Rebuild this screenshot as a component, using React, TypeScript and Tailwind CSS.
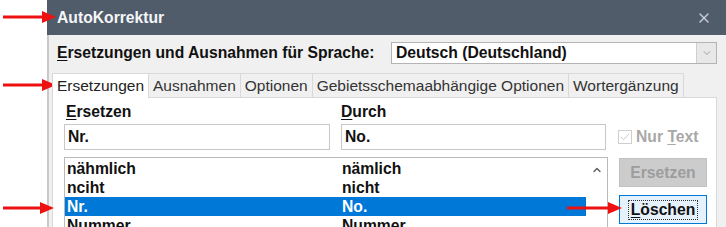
import { Check, ChevronDown, ChevronUp, X } from 'lucide-react';

const FONT = { fontFamily: '"Liberation Sans", Arial, sans-serif' };

const tabs = ['Ersetzungen', 'Ausnahmen', 'Optionen', 'Gebietsschemaabhängige Optionen', 'Wortergänzung'];

const rows = [
  { from: 'nähmlich', to: 'nämlich' },
  { from: 'nciht', to: 'nicht' },
  { from: 'Nr.', to: 'No.', selected: true },
  { from: 'Nummer', to: 'Nummer' },
];

function Arrow({ x, y, length }: { x: number; y: number; length: number }) {
  // red annotation arrow, tip at x + length
  return (
    <svg
      className="absolute pointer-events-none"
      style={{ left: x, top: y - 7 }}
      width={length}
      height={14}
      viewBox={`0 0 ${length} 14`}>
      <rect x={0} y={5.5} width={length - 13} height={3} fill="#ee1111" />
      <polygon points={`${length - 14},1 ${length},7 ${length - 14},13`} fill="#ee1111" />
    </svg>
  );
}

export default function App() {
  return (
    <div className="relative w-[726px] h-[227px] overflow-hidden bg-white" style={FONT}>
      <div className="ml-[47px] flex flex-col h-full">
        {/* title bar */}
        <div className="h-[35px] shrink-0 bg-[#515c6b] flex items-center justify-between pl-[10px] pr-[14px]">
          <span className="text-[15.7px] font-bold text-[#f4f5f7]">AutoKorrektur</span>
          <X size={16} strokeWidth={2} className="text-[#c9ced6]" />
        </div>

        {/* body */}
        <div className="flex-1 bg-[#f0f0f0] border-l-2 border-[#c9c9c9] pl-[3px] pr-[9px]">
          <div className="flex items-center h-[22px] mt-[7px] pl-[5px]">
            <span className="w-[334px] text-[15.7px] font-bold text-[#111]">
              <span className="underline underline-offset-2">E</span>rsetzungen und Ausnahmen für Sprache:
            </span>
            <div className="flex-1 h-[22px] flex items-center bg-white border border-[#b4b4b4]">
              <span className="flex-1 pl-[4px] text-[15.7px] font-bold text-[#111]">Deutsch (Deutschland)</span>
              <div className="w-[20px] h-full flex items-center justify-center bg-[#e8e8e8] border-l border-[#cfcfcf]">
                <ChevronDown size={12} strokeWidth={1.5} className="text-[#888]" />
              </div>
            </div>
          </div>

          {/* tabs */}
          <div className="flex items-end h-[24px] mt-[9px]">
            {tabs.map((t, i) => (
              <div
                key={t}
                className={`h-[24px] px-[4px] flex items-center text-[15.5px] border-t border-r border-[#d9d9d9] ${
                  i === 0 ? 'bg-white border-l text-[#222] -mb-px relative z-10 h-[25px]' : 'bg-[#f0f0f0] text-[#333]'
                }`}>
                {t}
              </div>
            ))}
          </div>

          {/* panel */}
          <div className="bg-white border border-[#d9d9d9] h-[200px] pl-[11px] pt-[5px]">
            <div className="flex text-[15.7px] leading-[18px] font-bold text-[#111]">
              <span className="w-[277px] pl-[2px]">
                <span className="underline underline-offset-2">E</span>rsetzen
              </span>
              <span>
                <span className="underline underline-offset-2">D</span>urch
              </span>
            </div>

            <div className="flex items-center mt-[3px]">
              <div className="w-[266px] h-[26px] border border-[#c8c8c8] flex items-center pl-[3px] text-[15.7px] font-bold text-[#111]">
                Nr.
              </div>
              <div className="w-[265px] ml-[11px] h-[26px] border border-[#c8c8c8] flex items-center pl-[3px] text-[15.7px] font-bold text-[#111]">
                No.
              </div>
              <div className="ml-[12px] flex items-center gap-[4px] text-[15.7px] font-bold text-[#a8a8a8]">
                <span className="w-[14px] h-[14px] border border-[#cfcfcf] flex items-center justify-center">
                  <Check size={12} strokeWidth={1.5} className="text-[#b8b8b8]" />
                </span>
                <span>
                  Nur <span className="underline underline-offset-2">T</span>ext
                </span>
              </div>
            </div>

            <div className="flex mt-[7px]">
              {/* list */}
              <div className="w-[544px] h-[90px] border border-[#b9b9b9] flex pt-px">
                <div className="flex-1 flex flex-col">
                  {rows.map(r => (
                    <div
                      key={r.from}
                      className={`h-[19px] shrink-0 flex items-center text-[15.7px] font-bold ${
                        r.selected ? 'bg-[#0078d7] text-white' : 'text-[#111]'
                      }`}>
                      <span className="w-[277px] pl-[2px]">{r.from}</span>
                      <span>{r.to}</span>
                    </div>
                  ))}
                </div>
                <div className="w-[21px] flex justify-center pt-[5px]">
                  <ChevronUp size={12} strokeWidth={2.5} className="text-[#555]" />
                </div>
              </div>

              {/* buttons */}
              <div className="ml-[11px] flex flex-col gap-[8px] pt-px">
                <div className="w-[88px] h-[29px] bg-[#cccccc] border border-[#c2c2c2] flex items-center justify-center text-[15.7px] font-bold text-[#9d9d9d]">
                  Ersetzen
                </div>
                <div className="w-[88px] h-[29px] bg-[#e5f1fb] border border-[#0078d7] flex items-center justify-center">
                  <span className="border border-dotted border-[#333] px-[2px] text-[15.7px] font-bold text-[#111] leading-[18px]">
                    <span className="underline underline-offset-2">L</span>öschen
                  </span>
                </div>
              </div>
            </div>
          </div>
        </div>
      </div>

      <Arrow x={3} y={17} length={53} />
      <Arrow x={3} y={85} length={53} />
      <Arrow x={3} y={208} length={51} />
      <Arrow x={567} y={208} length={55} />
    </div>
  );
}
